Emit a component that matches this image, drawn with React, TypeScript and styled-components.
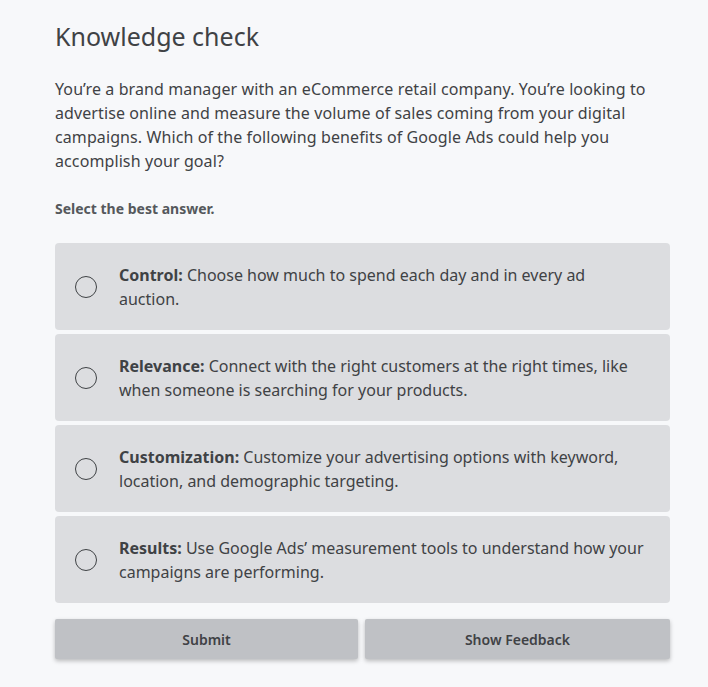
import React, {useState} from 'react';
import styled, {createGlobalStyle} from "styled-components";

const GlobalStyle = createGlobalStyle`
    html, body {
        margin: 0;
        padding: 0;
        background: #f7f8fa;
    }

    body {
        font-family: "Noto Sans", "Open Sans", Arial, sans-serif;
        color: #3f4245;
    }
`;

type Option = {
    label: string;
    text: string;
}

const options: Option[] = [
    {label: "Control:", text: "Choose how much to spend each day and in every ad auction."},
    {label: "Relevance:", text: "Connect with the right customers at the right times, like when someone is searching for your products."},
    {label: "Customization:", text: "Customize your advertising options with keyword, location, and demographic targeting."},
    {label: "Results:", text: "Use Google Ads\u2019 measurement tools to understand how your campaigns are performing."},
];


export default function App() {

    const [selected, setSelected] = useState<number | null>(null);

    return (
        <>
            <GlobalStyle/>
            <Page>
                <Title>Knowledge check</Title>
                <Question>
                    You’re a brand manager with an eCommerce retail company. You’re looking to advertise online and
                    measure the volume of sales coming from your digital campaigns. Which of the following benefits of
                    Google Ads could help you accomplish your goal?
                </Question>
                <Hint>Select the best answer.</Hint>

                <OptionList>
                    {options.map((opt, index) => (
                        <OptionRow key={index} onClick={() => setSelected(index)}>
                            <Radio checked={selected === index}/>
                            <OptionText>
                                <b>{opt.label}</b> {opt.text}
                            </OptionText>
                        </OptionRow>
                    ))}
                </OptionList>

                <Buttons>
                    <Button>Submit</Button>
                    <Button>Show Feedback</Button>
                </Buttons>
            </Page>
        </>
    );
}

const Page = styled.div`
    width: 615px;
    margin: 0 0 0 55px;
    padding-top: 19px;
    padding-bottom: 28px;
`;

const Title = styled.h1`
    margin: 0 0 24px;
    font-size: 25px;
    font-weight: 400;
    line-height: 34px;
    color: #3f4245;
`;

const Question = styled.p`
    margin: 0 0 26px;
    font-size: 16px;
    line-height: 24px;
    letter-spacing: 0.1px;
    color: #3f4245;
`;

const Hint = styled.p`
    margin: 0 0 24px;
    font-size: 14px;
    font-weight: 700;
    line-height: 20px;
    color: #55585c;
`;

const OptionList = styled.div`
    display: flex;
    flex-direction: column;
    gap: 4px;
`;

const OptionRow = styled.div`
    display: flex;
    align-items: center;
    gap: 22px;
    min-height: 87px;
    box-sizing: border-box;
    padding: 19px 24px 19px 20px;
    background: #dcdde0;
    border-radius: 4px;
    cursor: pointer;
`;

const Radio = styled.span<{ checked: boolean }>`
    flex: none;
    width: 22px;
    height: 22px;
    border: 1.5px solid #3f4245;
    border-radius: 50%;
    box-sizing: border-box;
    background: ${p => p.checked ? "radial-gradient(circle, #3f4245 45%, transparent 50%)" : "transparent"};
`;

const OptionText = styled.div`
    font-size: 16px;
    line-height: 24px;
    color: #3f4245;

    b {
        font-weight: 700;
    }
`;

const Buttons = styled.div`
    display: grid;
    grid-template-columns: 303px 305px;
    gap: 7px;
    margin-top: 16px;
`;

const Button = styled.button`
    height: 40px;
    border: none;
    border-radius: 2px;
    background: #bfc1c5;
    box-shadow: 0 2px 4px rgba(0, 0, 0, 0.25);
    font-family: "Noto Sans", "Open Sans", Arial, sans-serif;
    font-size: 14px;
    font-weight: 600;
    color: #3f4245;
    cursor: pointer;
`;
